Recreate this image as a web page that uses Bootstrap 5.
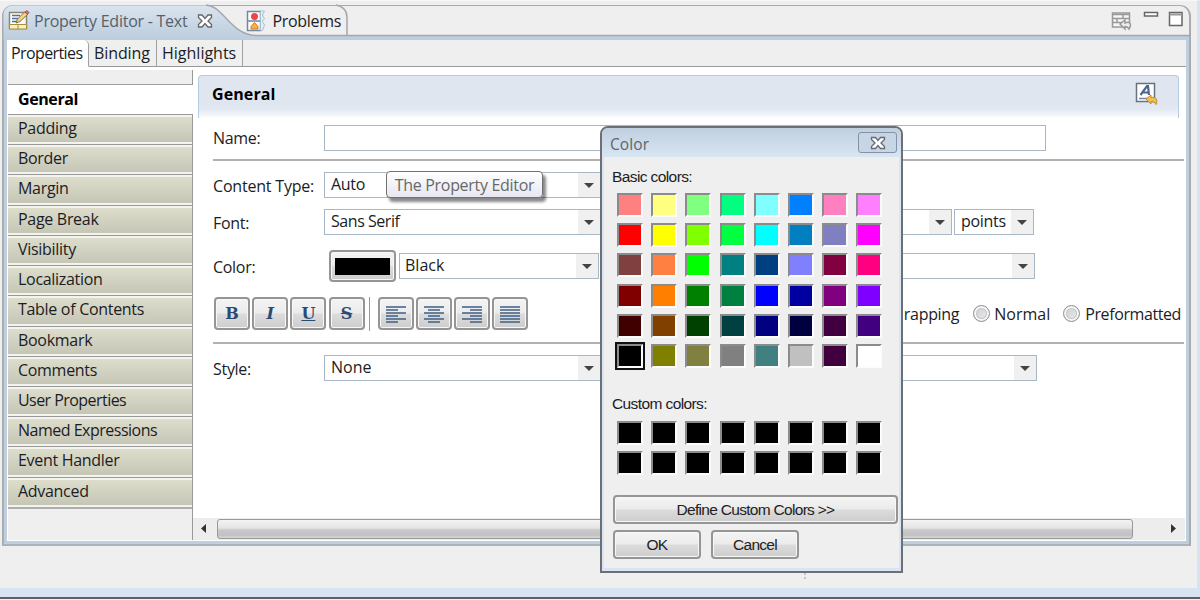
<!DOCTYPE html>
<html lang="en">
<head>
<meta charset="utf-8">
<title>Property Editor</title>
<link href="https://cdn.jsdelivr.net/npm/bootstrap@5.3.0/dist/css/bootstrap.min.css" rel="stylesheet">
<style>
body{width:1200px;height:600px;overflow:hidden;background:#efefef;font:16px/20px "Open Sans","Noto Sans",sans-serif;letter-spacing:-.3px;color:#1c1c24;white-space:nowrap}
.shell{height:588px;padding:4px 6px 0 2px;border-right:3px solid #d6e4f2;border-top:1px solid #f8f8f8}
.strip-btm{height:9px;background:#d6e4f2}
.strip-line{height:2px;background:#606063}
.view{width:1189px;height:541px;border:2px solid #a9abae;border-radius:11px 11px 0 0;position:relative;background:#efefef;border-bottom-color:#a9b3bd;border-top-width:1px}
.tabs-top{height:30px;position:relative}
.tabs-top svg.curve{position:absolute;left:-2px;top:-2px}
.tabs-top>div{position:relative}
.frame{height:508px;border:3px solid #bfcfde;border-top:4px solid #bccddc;background:#fff}
.subtabs{height:27px;background:#efefef}
.subtab{height:27px;border-right:1px solid #a0a0a0;border-bottom:1px solid #999;padding-top:3px}
.subtab.on{background:#fff;border-bottom-color:#fff;border-radius:0 5px 0 0}
.subrest{border-bottom:1px solid #999}
.side{width:185px;margin-left:1px;margin-top:3px;height:470px;background:#efefef;border-right:1px solid #999}
.side .cap{height:15px;border-bottom:1px solid #a0a0a0}
.side .cur{height:29px;background:#fff;font-weight:700;padding:4px 0 0 10px;color:#000;margin-right:-2px;letter-spacing:-.4px}
.side .it{height:30.23px;border-top:1px solid #999;padding:2px 0;background:#f4f4ee}
.side .it div{height:100%;background:linear-gradient(#deddcc,#c5c6b6);padding:1px 0 0 10px}
.main{height:470px;margin-top:3px;width:993px;position:relative}
.head{margin:5px 7px 0 5px;height:43px;border:1px solid #b4cbe4;border-bottom:0;border-radius:4px 4px 0 0;background:linear-gradient(#dfe6f0 0,#dfe6f0 27px,#e3eaf3 34px,#fff 43px);color:#000;padding:0 19px 7px 13px;letter-spacing:.1px}
.frow{padding-left:20px}
.lab{width:111px;padding-top:1px}
.rule{height:2px;background:#b2b2b2;margin-left:20px;width:971px}
.box{height:26px;border:1px solid #a9b6c6;background:#fff;padding-left:6px}
.box span{padding-top:1px}
.arr{width:22px;height:100%;background:#f0f0f0}
.arr:after{content:"";border:5px solid transparent;border-top-color:#444;border-bottom:0}
.btn3{border:2px solid #959595;border-radius:4px;background:linear-gradient(#f4f4f4,#ebebeb 48%,#dcdcdc 52%,#cdcdcd);box-shadow:inset 0 0 0 1px #f7f7f7;color:#222}
.tb{width:36px;height:33px;font:700 16px/20px "DejaVu Serif",serif;letter-spacing:0;color:#284b73;margin-right:2.2px}
.rad{width:17px;height:17px;border-radius:50%;border:1px solid #909090;box-shadow:inset 0 0 0 2px #f6f6f6,inset 0 0 0 3px #c4c4c4;background:linear-gradient(135deg,#c4cad0,#f0f0f0)}
.sb{height:22px;background:#ededed}
.thumb{height:20px;width:916px;border:1px solid #999;border-radius:3px;background:linear-gradient(#f3f3f3,#e4e4e4 45%,#c9c9cb 55%,#c1c1c3 85%,#d8d8d8)}
.tip3{position:absolute;left:386px;top:171px;width:157px;height:27px;border:1px solid #707070;border-radius:4px;background:linear-gradient(#fff,#e6e7f1);box-shadow:3px 4px 3px #0007;color:#686868}
.grip{position:absolute;left:804px;top:573px;width:2px;height:6px;border-top:2px solid #c4c4c4;border-bottom:2px solid #c4c4c4}
.dlg{position:absolute;left:600px;top:126px;width:303px;height:447px;border:2px solid #6c7076;border-radius:8px 8px 0 0;background:#d9e5f2;padding:0 2px 3px;font:15.5px/20px "Liberation Sans",sans-serif;letter-spacing:-.7px}
.dtitle{height:29px;margin:0 -2px;padding:0 4px 0 8px;border-radius:6px 6px 0 0;background:linear-gradient(#c0cfde,#d8e5f3);font-family:"Open Sans",sans-serif;letter-spacing:.1px;color:#5d6570}
.xb{width:39px;height:21px;border:1px solid #8492a8;border-radius:3px;background:#c7d5e4}
.dbody{height:411px;background:#efefef;position:relative}
.pal{display:grid;grid-template-columns:repeat(8,26px);column-gap:8.2px;row-gap:6.2px;margin-left:13px}
.pal i{height:24px;border:2px solid;border-color:#8b8b8b #fcfcfc #fcfcfc #8b8b8b}
.pal i.sel{outline:2px solid #111}
.dlg .btn3{height:29px}
</style>
</head>
<body>
<div class="shell">
 <div class="view">
  <div class="tabs-top d-flex">
   <svg class="curve" width="1189" height="35" fill="none"><defs><linearGradient id="g" x2="0" y2="1"><stop stop-color="#dae4ee"/><stop offset="1" stop-color="#bccddd"/></linearGradient></defs><path d="M1.500 34V11Q2 1.500 12 1.500H204C222 2 227 30 254 31.500V35H1z" fill="url(#g)"/><path d="M204 1C222 2 227 30 254 31.500H1189M334 1Q345 3 345 14V31" stroke="#a5a7aa" stroke-width="1.500"/></svg>
   <div class="d-flex align-items-center" style="padding-left:4px;color:#56606b">
    <svg width="22" height="22" viewBox="0 0 22 22"><path d="M1.500 2.500h17v16h-17z" fill="#fff" stroke="#8d8768" stroke-width="1.500"/><path d="M4 5.500h8M4 8.500h6M4 11.500h5" stroke="#4d7298" stroke-width="1.500"/><path d="M1.500 14.500h17v4.500h-17zM10 15v4" fill="#fbeebb" stroke="#a78e45"/><path d="M8 13l1.500-4 7-7 3 2.500-7.500 7z" fill="#f3d489" stroke="#7e6c44"/><path d="M17 2l2-1.500 2 2-1.500 2z" fill="#d46b79" stroke="#b25562"/></svg>
    <span style="margin-left:4px;letter-spacing:-.25px">Property Editor - Text</span>
    <svg width="16" height="16" viewBox="0 0 16 16" style="margin-left:10px"><path d="M1.500 2h3.500L8 5.500 11 2h3.500v2.500L11 8l3.500 3.500V14H11l-3-3.500L5 14H1.500v-2.500L5 8 1.500 4.500z" fill="#fff" stroke="#666" stroke-width="1.300"/></svg>
   </div>
   <div class="d-flex align-items-center" style="margin-left:33px">
    <svg width="21" height="22" viewBox="0 0 21 22"><path d="M1.500 1.500h13v19h-13zM1.500 11h13" fill="#fff" stroke="#6f87a8" stroke-width="1.500"/><path d="M14.500 1h4l-2 4 2 4-2.500 2 2.500 4-2 5.500h-2z" fill="#e4f0f8" stroke="#a9c0d2"/><circle cx="8.500" cy="6.500" r="3.500" fill="#ed4646"/><path d="M8.500 12.500l3.500 4v2.500h-7v-2.500z" fill="#f5b04b" stroke="#cd7e20"/></svg>
    <span style="margin-left:5px;color:#1c1c24">Problems</span>
   </div>
   <div class="ms-auto d-flex align-items-center" style="padding-right:2px">
    <svg width="76" height="24" viewBox="0 0 76 24" fill="none" stroke="#999" stroke-width="1.500" style="margin-top:-3px"><path d="M1.500 5h17v14h-17z" fill="#f6f6f6"/><path d="M1.500 6.500h17M1.500 10.500h17M1.500 14.500h12M6 10v4.500M12 6v4.500"/><path d="M9 16l5-4v3c5-2 7 1 4 6-1-2-2-2.500-4-2.500v2.500z" fill="#eee"/><path d="M33.500 4.500h13v3.500h-13z" stroke="#666" fill="#fff"/><path d="M58.500 4.500h12.500v13H58.500z" stroke="#666" fill="#fff"/><path d="M58.500 6.500H71" stroke="#999" stroke-width="2"/></svg>
   </div>
  </div>
  <div class="frame">
   <div class="subtabs d-flex">
    <div class="subtab on" style="width:82px;padding-left:4px;letter-spacing:-.6px">Properties</div>
    <div class="subtab" style="width:68px;padding-left:5px;letter-spacing:-.1px">Binding</div>
    <div class="subtab" style="width:86px;padding-left:5px;letter-spacing:0">Highlights</div>
    <div class="subrest flex-grow-1"></div>
   </div>
   <div class="d-flex">
    <div class="side">
     <div class="cap"></div><div class="cur">General</div>
     <div class="it"><div>Padding</div></div><div class="it"><div>Border</div></div><div class="it"><div>Margin</div></div><div class="it"><div>Page Break</div></div><div class="it"><div>Visibility</div></div><div class="it"><div>Localization</div></div><div class="it"><div>Table of Contents</div></div><div class="it"><div>Bookmark</div></div><div class="it"><div>Comments</div></div><div class="it"><div style="letter-spacing:-.55px">User Properties</div></div><div class="it"><div style="letter-spacing:-.5px">Named Expressions</div></div><div class="it"><div>Event Handler</div></div><div class="it"><div>Advanced</div></div>
     <div style="border-top:2px solid #adadad"></div>
    </div>
    <div class="main d-flex flex-column">
     <div class="head d-flex align-items-center justify-content-between"><b>General</b>
      <svg width="24" height="24" viewBox="0 0 24 24"><path d="M1.500 1.500h18v18h-18z" fill="#fff" stroke="#68717c" stroke-width="1.500"/><path d="M5.500 13L12 4h1l1 9M8 10.500h6" fill="none" stroke="#4d6690" stroke-width="2.200"/><path d="M4 16.500h9" stroke="#6f86a8" stroke-width="1.500"/><path d="M11 17l5-4v2.500c5-1 7 2 5 7-1-2.500-3-3-5-3V22z" fill="#f4c04c" stroke="#c38a23"/></svg></div>
     <div class="frow d-flex align-items-center" style="height:41px;padding-bottom:2px"><div class="lab">Name:</div><div class="box" style="width:722px"></div></div>
     <div class="rule"></div>
     <div class="frow d-flex align-items-center" style="height:48px"><div class="lab" style="letter-spacing:-.2px">Content Type:</div><div class="box d-flex justify-content-between" style="width:277px"><span>Auto</span><div class="arr d-flex align-items-center justify-content-center"></div></div></div>
     <div class="frow d-flex align-items-center" style="height:26px"><div class="lab">Font:</div><div class="box d-flex justify-content-between" style="width:277px"><span style="letter-spacing:-.45px">Sans Serif</span><div class="arr d-flex align-items-center justify-content-center"></div></div>
      <div class="box d-flex justify-content-end" style="width:251px;margin-left:100px"><div class="arr d-flex align-items-center justify-content-center"></div></div><div class="box d-flex justify-content-between" style="width:80px;margin-left:2px"><span>points</span><div class="arr d-flex align-items-center justify-content-center"></div></div></div>
     <div class="frow d-flex align-items-center" style="height:62px"><div class="lab">Color:</div><div class="btn3 d-flex align-items-center justify-content-center" style="width:67px;height:32px;margin-left:5px"><div style="width:55px;height:17px;background:#000"></div></div><div class="box d-flex justify-content-between" style="width:200px;margin-left:3px;padding-left:5px"><span style="letter-spacing:0">Black</span><div class="arr d-flex align-items-center justify-content-center"></div></div><div class="box d-flex justify-content-end" style="width:335px;margin-left:101px"><div class="arr d-flex align-items-center justify-content-center"></div></div></div>
     <div class="frow d-flex align-items-center" style="height:33px;padding-left:21px">
      <div class="btn3 tb d-flex align-items-center justify-content-center">B</div><div class="btn3 tb d-flex align-items-center justify-content-center"><i>I</i></div><div class="btn3 tb d-flex align-items-center justify-content-center"><u>U</u></div><div class="btn3 tb d-flex align-items-center justify-content-center"><s>S</s></div>
      <div style="width:1px;height:34px;background:#999;margin:0 8px 0 2px"></div>
      <div class="btn3 tb d-flex align-items-center justify-content-center"><svg width="20" height="18" stroke="#3f5f84" stroke-width="1.700"><path d="M0 2h20M0 5h12M0 8h20M0 11h12M0 14h20M0 17h12"/></svg></div>
      <div class="btn3 tb d-flex align-items-center justify-content-center"><svg width="20" height="18" stroke="#3f5f84" stroke-width="1.700"><path d="M0 2h20M4 5h12M0 8h20M4 11h12M0 14h20M4 17h12"/></svg></div>
      <div class="btn3 tb d-flex align-items-center justify-content-center"><svg width="20" height="18" stroke="#3f5f84" stroke-width="1.700"><path d="M0 2h20M8 5h12M0 8h20M8 11h12M0 14h20M8 17h12"/></svg></div>
      <div class="btn3 tb d-flex align-items-center justify-content-center"><svg width="20" height="18" stroke="#3f5f84" stroke-width="1.700"><path d="M0 2h20M0 5h20M0 8h20M0 11h20M0 14h20M0 17h20"/></svg></div>
      <div class="d-flex align-items-center ms-auto" style="margin-right:5px"><span style="margin-right:14px">rapping</span><div class="rad"></div><span style="margin:0 13px 0 4px;letter-spacing:0">Normal</span><div class="rad"></div><span style="margin-left:5px;letter-spacing:-.4px">Preformatted</span></div>
     </div>
     <div class="rule" style="margin-top:12px"></div>
     <div class="frow d-flex align-items-center" style="height:48px"><div class="lab">Style:</div><div class="box d-flex justify-content-between" style="width:277px"><span style="letter-spacing:0">None</span><div class="arr d-flex align-items-center justify-content-center"></div></div><div class="box d-flex justify-content-end" style="width:336px;margin-left:100px"><div class="arr d-flex align-items-center justify-content-center"></div></div></div>
     <div class="sb d-flex align-items-center mt-auto" style="padding-left:7px;width:992px">
      <svg width="8" height="10"><path d="M6 0v9L1 4.500z" fill="#333"/></svg><div class="thumb" style="margin-left:9px"></div><svg width="8" height="10" style="margin-left:37px"><path d="M1 0v9l5-4.500z" fill="#333"/></svg></div>
    </div>
   </div>
  </div>
 </div>
</div>
<div class="strip-btm"></div><div class="strip-line"></div>
<div class="grip"></div>
<div class="tip3 d-flex align-items-center justify-content-center">The Property Editor</div>
<div class="dlg">
 <div class="dtitle d-flex align-items-center justify-content-between"><span style="padding-top:2px">Color</span><div class="xb d-flex align-items-center justify-content-center"><svg width="16" height="14" viewBox="0 0 16 14"><path d="M1.500 1.500h4L8 4.500l2.500-3h4v2L11 7l3.500 3.500v2h-4L8 9.500l-2.500 3h-4v-2L5 7 1.500 3.500z" fill="#fff" stroke="#626a78" stroke-width="1.300"/></svg></div></div>
 <div class="dbody" style="padding-top:10px">
  <div style="height:26px;padding-left:8px;letter-spacing:-.6px">Basic colors:</div>
  <div class="pal" id="basic"></div>
  <div style="margin-top:26px;height:27px;padding-left:8px;letter-spacing:-.6px">Custom colors:</div>
  <div class="pal" id="custom"></div>
  <div class="btn3 d-flex align-items-center justify-content-center" style="margin:20px 0 0 9px;width:285px">Define Custom Colors &gt;&gt;</div>
  <div class="d-flex" style="margin:6px 0 0 9px;gap:10px"><div class="btn3 d-flex align-items-center justify-content-center" style="width:88px">OK</div><div class="btn3 d-flex align-items-center justify-content-center" style="width:88px">Cancel</div></div>
 </div>
</div>
<script src="https://cdn.jsdelivr.net/npm/bootstrap@5.3.0/dist/js/bootstrap.bundle.min.js"></script>
<script>
const colors='ff8080 ffff80 80ff80 00ff80 80ffff 0080ff ff80c0 ff80ff ff0000 ffff00 80ff00 00ff40 00ffff 0080c0 8080c0 ff00ff 804040 ff8040 00ff00 008080 004080 8080ff 800040 ff0080 800000 ff8000 008000 008040 0000ff 0000a0 800080 8000ff 400000 804000 004000 004040 000080 000040 400040 400080 000000 808000 808040 808080 408080 c0c0c0 400040 ffffff'.split(' ');
const swatch=(c,sel)=>`<i class="${sel?'sel':''}" style="background:#${c}"></i>`;
document.getElementById('basic').innerHTML=colors.map((c,i)=>swatch(c,i===40)).join('');
document.getElementById('custom').innerHTML=Array(16).fill('000').map(c=>swatch(c)).join('');
</script>
</body>
</html>
